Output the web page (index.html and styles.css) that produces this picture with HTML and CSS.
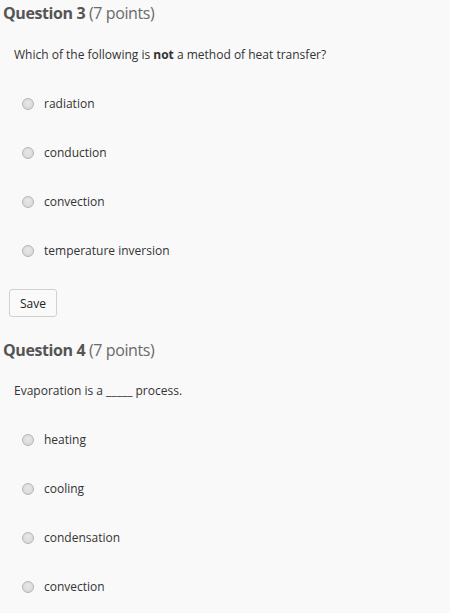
FILE: index.html
```html
<!DOCTYPE html>
<html>
<head>
<meta charset="utf-8">
<link rel="stylesheet" href="styles.css">
</head>
<body>
<div class="quiz">
  <section class="question">
    <h2 class="q-title"><strong>Question 3</strong> <span class="pts">(7 points)</span></h2>
    <p class="q-text">Which of the following is <b>not</b> a method of heat transfer?</p>
    <ul class="options">
      <li class="option"><span class="radio"></span><span>radiation</span></li>
      <li class="option"><span class="radio"></span><span>conduction</span></li>
      <li class="option"><span class="radio"></span><span>convection</span></li>
      <li class="option"><span class="radio"></span><span>temperature inversion</span></li>
    </ul>
    <button class="save">Save</button>
  </section>
  <section class="question">
    <h2 class="q-title"><strong>Question 4</strong> <span class="pts">(7 points)</span></h2>
    <p class="q-text q-text-tight">Evaporation is a _____ process.</p>
    <ul class="options">
      <li class="option"><span class="radio"></span><span>heating</span></li>
      <li class="option"><span class="radio"></span><span>cooling</span></li>
      <li class="option"><span class="radio"></span><span>condensation</span></li>
      <li class="option"><span class="radio"></span><span>convection</span></li>
    </ul>
  </section>
</div>
</body>
</html>
```
FILE: styles.css
```css
html, body {
  margin: 0;
  padding: 0;
  background: #f9f9f9;
}
body {
  font-family: "Open Sans", "Liberation Sans", sans-serif;
  color: #333;
}
.quiz {
  display: flex;
  flex-direction: column;
}
.question {
  display: flex;
  flex-direction: column;
  align-items: flex-start;
}
.q-title {
  margin: 0;
  padding: 2px 0 0 3px;
  font-size: 16px;
  line-height: 22px;
  font-weight: normal;
  color: #6a6a6a;
  letter-spacing: -0.4px;
}
.q-title strong {
  color: #555;
  font-weight: 700;
}
.q-text {
  margin: 23px 0 0 14px;
  font-size: 12px;
  line-height: 16px;
  color: #333;
}
.q-text-tight {
  margin-top: 22px;
}
.q-text b {
  font-weight: 700;
}
.options {
  list-style: none;
  margin: 33px 0 0 0;
  padding: 0 0 0 22px;
  display: flex;
  flex-direction: column;
  gap: 33px;
}
.option {
  display: flex;
  align-items: center;
  gap: 10px;
  font-size: 12px;
  line-height: 16px;
  color: #333;
}
.radio {
  width: 10px;
  height: 10px;
  border-radius: 50%;
  border: 1px solid #b5b5b5;
  background: radial-gradient(circle at 50% 40%, #e8e8e8, #d4d4d4);
  box-sizing: content-box;
}
.save {
  margin: 30px 0 0 9px;
  width: 48px;
  height: 28px;
  padding: 0;
  border: 1px solid #d0d0d0;
  border-radius: 3px;
  background: #fafafa;
  font-family: "Open Sans", "Liberation Sans", sans-serif;
  font-size: 12px;
  color: #222;
}
.question + .question .q-title {
  padding-top: 22px;
}
```
